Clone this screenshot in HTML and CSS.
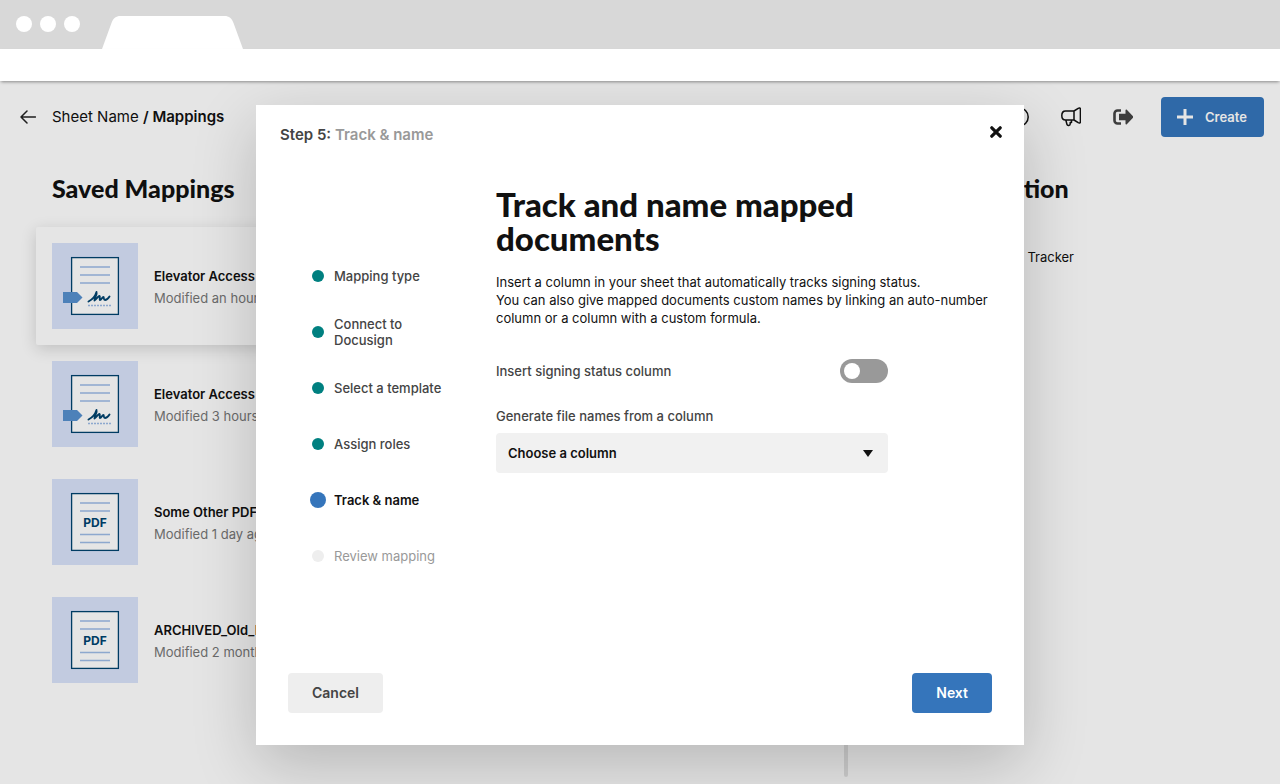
FILE: index.html
```html
<!DOCTYPE html>
<html lang="en">
<head>
    <meta charset="utf-8">
    <title>Mappings</title>
    <link rel="stylesheet" href="styles.css">
</head>
<body>
    <!-- icons used more than once -->
    <svg class="sprite" aria-hidden="true">
        <symbol id="doc-sign" viewBox="0 0 86 86">
            <rect x="19.6" y="14.6" width="46.8" height="56.8" fill="#fff" stroke="#00436f" stroke-width="1.3"/>
            <path d="M28 24h30M28 32h30M28 40h30" stroke="#9dbbe6" stroke-width="1.6"/>
            <path d="M11 49h14l5.500 5.500L25 60H11z" fill="#5690cf"/>
            <path d="M36.500 58.500c4-2 7-6 8-9.500 1 2-2 6-2 8.500 2-1 3-4 5-4.500 1 1-.5 3 .5 4 1.500 0 2-3 3.500-3 .5 1 0 3 1.500 3s3.500-2 4.500-3.500" fill="none" stroke="#00436f" stroke-width="1.9" stroke-linecap="round" stroke-linejoin="round"/>
            <path d="M36 62.500h24" stroke="#9dbbe6" stroke-width="1.300" stroke-dasharray="2 1"/>
        </symbol>
        <symbol id="doc-pdf" viewBox="0 0 86 86">
            <rect x="19.6" y="14.6" width="46.8" height="56.8" fill="#fff" stroke="#00436f" stroke-width="1.3"/>
            <path d="M28 24h30M28 32h30M28 55.500h30M28 63.500h30" stroke="#9dbbe6" stroke-width="1.6"/>
        </symbol>
    </svg>

    <div class="browser-bar">
        <span class="dot"></span>
        <span class="dot"></span>
        <span class="dot"></span>
        <svg class="tab" width="141" height="33" viewBox="0 0 141 33"><path d="M0 33 9.500 7C11 2.500 14 0 18.500 0h104c4.500 0 7.500 2.500 9 7L141 33z" fill="#fff"/></svg>
    </div>
    <div class="address-bar"></div>

    <div class="app">
        <header class="top">
            <a class="back" href="#" aria-label="Back">
                <svg width="16" height="14" viewBox="0 0 16 14"><path d="M7 1 1 7l6 6M1 7h14.500" fill="none" stroke="#222" stroke-width="1.5" stroke-linecap="round" stroke-linejoin="round"/></svg>
            </a>
            <p class="crumbs">Sheet Name <b>/ Mappings</b></p>
            <nav class="tools">
                <a href="#" aria-label="Help">
                    <svg width="20" height="20" viewBox="0 0 20 20"><circle cx="10" cy="10" r="9.200" fill="none" stroke="#111" stroke-width="1.5"/></svg>
                </a>
                <a href="#" aria-label="News">
                    <svg width="20" height="20" viewBox="0 0 20 20"><path d="M13 4H4.500C2.300 4 .8 5.800.8 8.500S2.300 13 4.500 13H13zM13 4l4.200-2.700c1.200-.7 2.200-.3 2.200 1v12.400c0 1.300-1 1.700-2.200 1L13 13M4.800 13l1.200 4.500c.4 1.400 3.200 1.200 3.200-.5v-1.500h1.300V13" fill="none" stroke="#111" stroke-width="1.500" stroke-linejoin="round"/></svg>
                </a>
                <a href="#" aria-label="Log out">
                    <svg width="20" height="20" viewBox="0 0 20 20"><path d="M8 3.500H4.500A3 3 0 0 0 1.500 6.500v7a3 3 0 0 0 3 3H8" fill="none" stroke="#444" stroke-width="2.600"/><path d="M6 6.800h6.500V3.200c0-.8.8-1 1.300-.5L20 9.300c.4.400.4 1 0 1.400l-6.200 6.600c-.5.500-1.300.3-1.300-.5v-3.600H6z" fill="#444"/></svg>
                </a>
            </nav>
            <button class="create" type="button">
                <svg width="16" height="16" viewBox="0 0 16 16"><path d="M8 0v16M0 8h16" stroke="#fff" stroke-width="3"/></svg>
                Create
            </button>
        </header>

        <main class="page">
            <section class="saved">
                <h2>Saved Mappings</h2>
                <ul class="mappings">
                    <li class="mapping selected">
                        <div class="thumb"><svg width="86" height="86"><use href="#doc-sign"/></svg></div>
                        <div class="mapping-text">
                            <h3>Elevator Access</h3>
                            <p>Modified an hour</p>
                        </div>
                    </li>
                    <li class="mapping">
                        <div class="thumb"><svg width="86" height="86"><use href="#doc-sign"/></svg></div>
                        <div class="mapping-text">
                            <h3>Elevator Access</h3>
                            <p>Modified 3 hours</p>
                        </div>
                    </li>
                    <li class="mapping">
                        <div class="thumb"><svg width="86" height="86"><use href="#doc-pdf"/></svg><span>PDF</span></div>
                        <div class="mapping-text">
                            <h3>Some Other PDF</h3>
                            <p>Modified 1 day ago</p>
                        </div>
                    </li>
                    <li class="mapping">
                        <div class="thumb"><svg width="86" height="86"><use href="#doc-pdf"/></svg><span>PDF</span></div>
                        <div class="mapping-text">
                            <h3>ARCHIVED_Old_P</h3>
                            <p>Modified 2 months</p>
                        </div>
                    </li>
                </ul>
            </section>
            <div class="scroll-track"></div>
            <aside class="info">
                <h2>Information</h2>
                <p>Visitor Access Tracker</p>
            </aside>
        </main>

        <div class="overlay">
            <form class="dialog" role="dialog" aria-labelledby="dialog-title">
                <div class="dialog-top">
                    <p>Step 5: <span>Track &amp; name</span></p>
                    <button class="close" type="button" aria-label="Close">
                        <svg width="12" height="12" viewBox="0 0 12 12"><path d="M1.800 1.800l8.400 8.400M10.200 1.800l-8.400 8.400" stroke="#111" stroke-width="3.200" stroke-linecap="round"/></svg>
                    </button>
                </div>

                <div class="dialog-body">
                    <ol class="steps">
                        <li class="done">Mapping type</li>
                        <li class="done">Connect to Docusign</li>
                        <li class="done">Select a template</li>
                        <li class="done">Assign roles</li>
                        <li class="current">Track &amp; name</li>
                        <li>Review mapping</li>
                    </ol>
                    <div class="content">
                        <h1 id="dialog-title">Track and name mapped documents</h1>
                        <p class="intro">Insert a column in your sheet that automatically tracks signing status.<br>You can also give mapped documents custom names by linking an auto-number column or a column with a custom formula.</p>
                        <div class="fields">
                            <div class="toggle-row">
                                <label for="status">Insert signing status column</label>
                                <input class="toggle" type="checkbox" id="status" name="status">
                            </div>
                            <label for="column">Generate file names from a column</label>
                            <div class="select">
                                <select id="column" name="column">
                                    <option>Choose a column</option>
                                </select>
                            </div>
                        </div>
                    </div>
                </div>

                <div class="dialog-buttons">
                    <button class="cancel" type="button">Cancel</button>
                    <button class="next" type="submit">Next</button>
                </div>
            </form>
        </div>
    </div>
</body>
</html>
```
FILE: styles.css
```css
* {
    box-sizing: border-box;
}
body {
    display: flex;
    flex-direction: column;
    min-height: 100vh;
    margin: 0;
    font-family: Inter, "Liberation Sans", sans-serif;
    font-size: 13px;
    line-height: 18px;
    color: #111;
    background-color: #fff;
}
h1, h2, h3, p, ul, ol {
    margin: 0;
    padding: 0;
}
ul, ol {
    list-style: none;
}
h1, h2 {
    font-family: Lato, "Liberation Sans", sans-serif;
    font-weight: 900;
}
svg {
    display: block;
}
button {
    border: none;
    border-radius: 4px;
    font-family: inherit;
    font-weight: 600;
    cursor: pointer;
}
.sprite {
    position: absolute;
    width: 0;
    height: 0;
}

/* browser frame */
.browser-bar {
    display: flex;
    gap: 8px;
    padding: 16px 16px 0;
    background-color: #d8d8d8;
}
.dot {
    width: 16px;
    height: 16px;
    border-radius: 50%;
    background-color: #fff;
}
.tab {
    margin-left: 14px;
}
.address-bar {
    position: relative;
    z-index: 1;
    height: 32px;
    background-color: #fff;
    box-shadow: 0 2px 3px -1px rgba(0, 0, 0, 0.4);
}

/* page behind the dialog */
.app {
    position: relative;
    display: flex;
    flex-direction: column;
    flex: 1;
    overflow: hidden;
}
.top {
    display: flex;
    align-items: center;
    padding: 16px 16px 16px 20px;
}
.crumbs {
    margin-left: 16px;
    font-size: 15px;
}
.crumbs b {
    font-weight: 600;
}
.tools {
    display: flex;
    gap: 32px;
    margin-left: auto;
}
.create {
    display: flex;
    align-items: center;
    gap: 12px;
    min-width: 103px;
    height: 40px;
    margin-left: 28px;
    padding: 0 16px;
    font-size: 13px;
    color: #fff;
    background-color: #3575bb;
}
.page {
    display: flex;
    flex: 1;
    padding-top: 19px;
}
.page h2 {
    font-size: 25px;
    line-height: 32px;
}
.saved {
    flex: 1;
    padding: 0 24px 0 36px;
}
.saved h2 {
    margin: 0 16px 23px;
}
.mapping {
    display: flex;
    align-items: center;
    gap: 16px;
    padding: 16px;
    line-height: 22px;
}
.mapping.selected {
    border-radius: 2px;
    box-shadow: 0 4px 16px rgba(0, 0, 0, 0.16);
}
.mapping-text {
    padding-top: 2px;
}
.mapping h3 {
    font-size: 13px;
    font-weight: 600;
}
.mapping p {
    color: #777;
}
.thumb {
    position: relative;
    background-color: #d9e3fa;
}
.thumb span {
    position: absolute;
    inset: 0;
    font-size: 12px;
    font-weight: 700;
    line-height: 88px;
    text-align: center;
    color: #00436f;
}
.scroll-track {
    width: 4px;
    margin-bottom: 7px;
    border-radius: 2px;
    background-color: #e5e5e5;
}
.info {
    width: 432px;
    padding-left: 88px;
}
.info h2 {
    margin-bottom: 44px;
}

/* dialog */
.overlay {
    position: absolute;
    inset: 0;
    padding-top: 24px;
    background-color: rgba(0, 0, 0, 0.1);
}
.dialog {
    display: flex;
    flex-direction: column;
    width: 60%;
    min-width: 768px;
    min-height: 640px;
    margin: 0 auto;
    background-color: #fff;
    box-shadow: 0 20px 60px rgba(0, 0, 0, 0.2);
}
.dialog-top {
    display: flex;
    justify-content: space-between;
    align-items: flex-start;
    padding: 21px 22px 0 24px;
    font-size: 15px;
    font-weight: 600;
    color: #444;
}
.dialog-top span {
    color: #999;
}
.close {
    padding: 0;
    background: none;
}
.dialog-body {
    display: grid;
    grid-template-columns: 186px 1fr;
    padding: 43px 32px 32px 54px;
}
.steps {
    padding-top: 61px;
}
.steps li {
    display: flex;
    align-items: center;
    gap: 8px;
    height: 56px;
    padding-right: 48px;
    line-height: 16px;
    color: #999;
}
.steps li::before {
    content: "";
    flex: none;
    width: 12px;
    height: 12px;
    margin: 0 2px;
    border-radius: 50%;
    background-color: #eee;
}
.steps .done {
    font-weight: 500;
    color: #444;
}
.steps .done::before {
    background-color: #008080;
}
.steps .current {
    font-weight: 600;
    color: #111;
}
.steps .current::before {
    width: 16px;
    height: 16px;
    margin: 0;
    background-color: #3575bb;
}
h1 {
    font-size: 33px;
    line-height: 34px;
}
.intro {
    margin: 18px 0 32px;
}
.fields {
    max-width: 392px;
    font-weight: 500;
    color: #444;
}
.toggle-row {
    display: flex;
    justify-content: space-between;
    align-items: center;
    margin-bottom: 24px;
}
.toggle {
    appearance: none;
    width: 48px;
    height: 24px;
    margin: 0;
    padding: 4px;
    border-radius: 12px;
    background-color: #999;
}
.toggle::before {
    content: "";
    display: block;
    width: 16px;
    height: 16px;
    border-radius: 50%;
    background-color: #fff;
}
.toggle:checked {
    padding-left: 28px;
    background-color: #008080;
}
.select {
    position: relative;
    margin-top: 8px;
}
.select select {
    appearance: none;
    display: block;
    width: 100%;
    height: 40px;
    padding: 0 12px;
    border: none;
    border-radius: 4px;
    font-family: inherit;
    font-size: 13px;
    font-weight: 600;
    color: #111;
    background-color: #f1f1f1;
}
.select::after {
    content: "";
    position: absolute;
    top: 17px;
    right: 15px;
    border: 5px solid transparent;
    border-top: 7px solid #111;
    border-bottom: none;
    pointer-events: none;
}
.dialog-buttons {
    display: flex;
    justify-content: space-between;
    margin-top: auto;
    padding: 0 32px 32px;
}
.dialog-buttons button {
    height: 40px;
    padding: 0 24px 1px;
    font-size: 14px;
}
.cancel {
    color: #444;
    background-color: #eee;
}
.next {
    color: #fff;
    background-color: #3575bb;
}
```
